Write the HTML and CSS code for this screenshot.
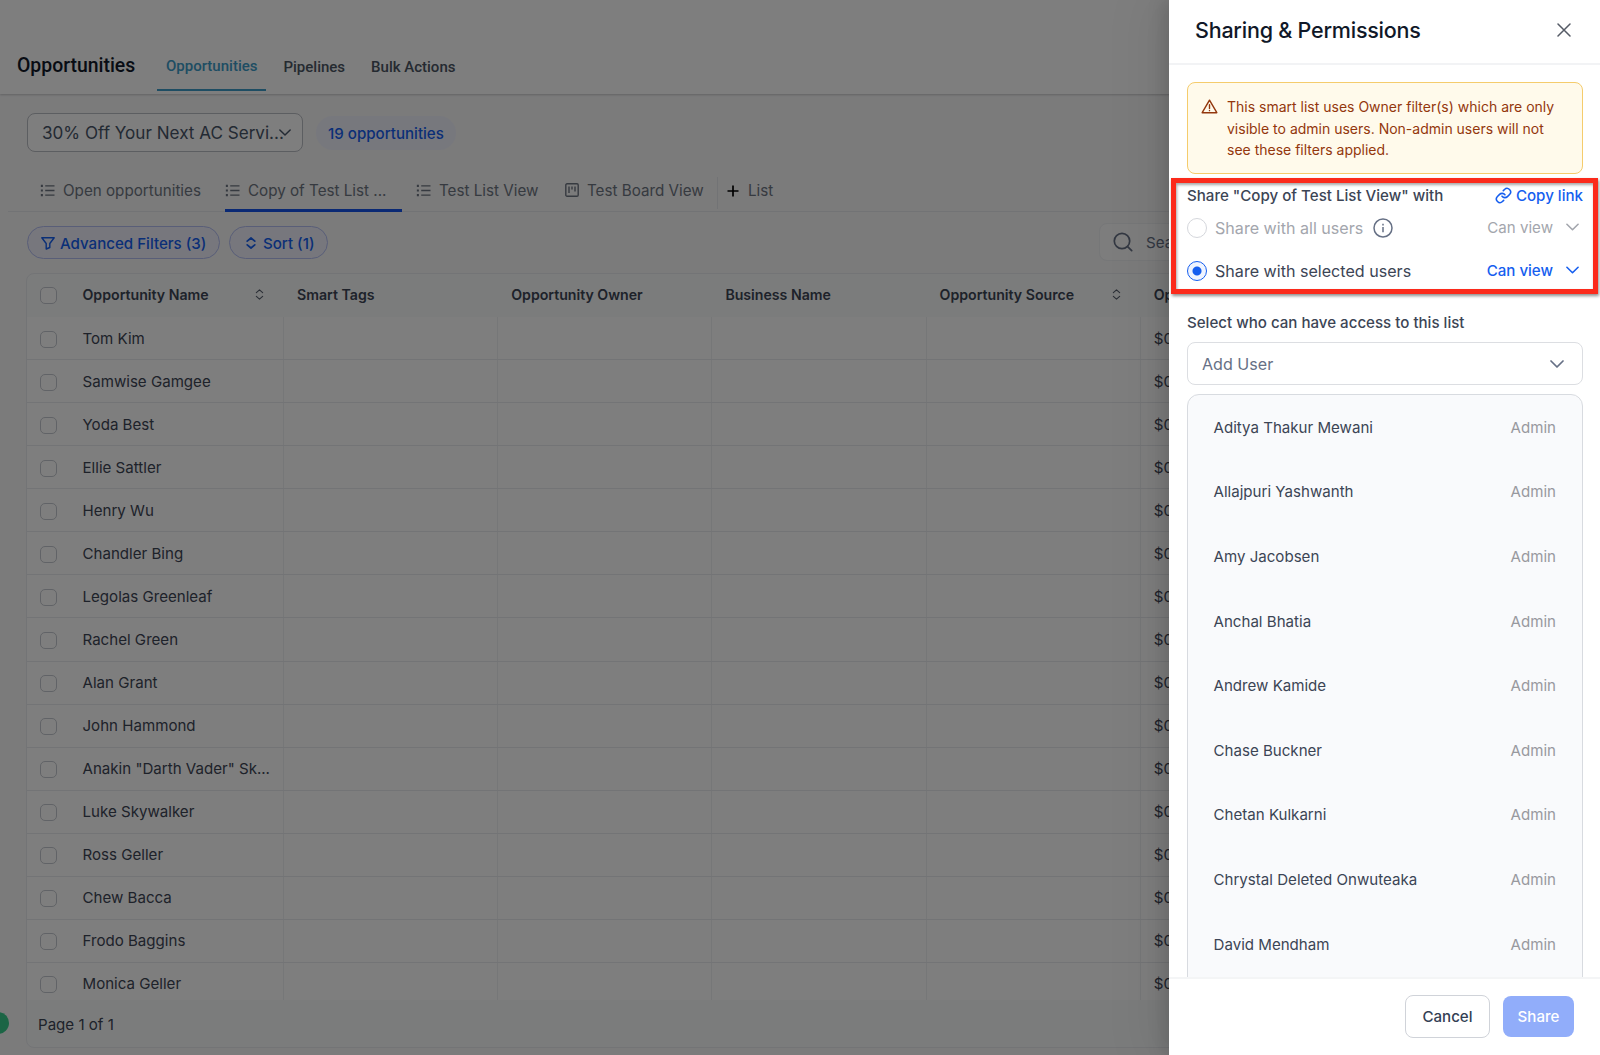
FILE: index.html
```html
<!DOCTYPE html>
<html lang="en">
<head>
    <meta charset="UTF-8">
    <meta name="viewport" content="width=device-width, initial-scale=1.0">
    <title>Opportunities</title>
    <link rel="stylesheet" href="styles.css">
</head>
<body>
    <!-- shared icons -->
    <svg class="sprite">
        <symbol id="icon-list" viewBox="0 0 16 14">
            <path d="M5 2h10M5 7h10M5 12h10" fill="none" stroke="currentColor" stroke-width="1.5"/>
            <path d="M.3.9h2.2v2.2H.3zM.3 5.9h2.2v2.2H.3zM.3 10.9h2.2v2.2H.3z" fill="currentColor"/>
        </symbol>
        <symbol id="icon-down" viewBox="0 0 14 8">
            <path d="M1 1l6 6 6-6" fill="none" stroke="currentColor" stroke-width="1.7" stroke-linecap="round" stroke-linejoin="round"/>
        </symbol>
        <symbol id="icon-sort" viewBox="0 0 10 12">
            <path d="M1.5 4L5 .8 8.5 4M1.5 8L5 11.2 8.5 8" fill="none" stroke="currentColor" stroke-width="1.2" stroke-linecap="round" stroke-linejoin="round"/>
        </symbol>
    </svg>

    <div class="page">
        <header class="topbar">
            <h1>Opportunities</h1>
            <nav class="topnav">
                <a class="active">Opportunities</a>
                <a>Pipelines</a>
                <a>Bulk Actions</a>
            </nav>
        </header>

        <div class="pipeline-row">
            <div class="pipeline-select">
                <span>30% Off Your Next AC Servi...</span>
                <svg class="chevron"><use href="#icon-down"/></svg>
            </div>
            <span class="count">19 opportunities</span>
        </div>

        <div class="views">
            <a class="view view-open"><svg class="list-icon"><use href="#icon-list"/></svg>Open opportunities</a>
            <a class="view view-copy active"><svg class="list-icon"><use href="#icon-list"/></svg>Copy of Test List ...</a>
            <a class="view view-list"><svg class="list-icon"><use href="#icon-list"/></svg>Test List View</a>
            <a class="view view-board">
                <svg class="board-icon" viewBox="0 0 14 14" fill="none" stroke="currentColor" stroke-width="1.4"><rect x=".8" y=".8" width="12.4" height="12.4" rx="1.2"/><path d="M4 3.5v6.500M7 3.5v3M10 3.5v5"/></svg>Test Board View</a>
            <a class="add-view">
                <svg viewBox="0 0 12 12"><path d="M6 .5v11M.5 6h11" stroke="#000" stroke-width="1.7"/></svg>List</a>
        </div>

        <div class="filters">
            <span class="pill pill-filter">
                <svg class="funnel" viewBox="0 0 14 13" fill="none" stroke="currentColor" stroke-width="1.4" stroke-linejoin="round"><path d="M.8.8h12.4L8.8 6.5v4L5.2 12V6.5z"/></svg>Advanced Filters (3)</span>
            <span class="pill pill-sort">
                <svg class="updown" viewBox="0 0 10 12" fill="none" stroke="currentColor" stroke-width="1.7" stroke-linecap="round" stroke-linejoin="round"><path d="M1.2 4.2L5 1l3.8 3.2M1.2 7.8L5 11l3.8-3.2"/></svg>Sort (1)</span>
            <div class="search">
                <svg viewBox="0 0 20 20" fill="none" stroke="#667085" stroke-width="1.7" stroke-linecap="round"><circle cx="9" cy="9" r="7.7"/><path d="M14.6 14.6L18.7 18.7"/></svg>
                Search
            </div>
        </div>

        <div class="table">
            <div class="table-head">
                <div class="cell name"><i class="check"></i>Opportunity Name<svg class="sort"><use href="#icon-sort"/></svg></div>
                <div class="cell">Smart Tags</div>
                <div class="cell">Opportunity Owner</div>
                <div class="cell">Business Name</div>
                <div class="cell">Opportunity Source<svg class="sort"><use href="#icon-sort"/></svg></div>
                <div class="cell">Op</div>
            </div>
            <div class="table-body" id="rows"></div>
            <div class="table-foot">Page 1 of 1</div>
        </div>
        <div class="chat-bubble"></div>
    </div>

    <div class="overlay"></div>

    <aside class="drawer">
        <div class="drawer-head">
            <h2>Sharing &amp; Permissions</h2>
            <svg class="close" viewBox="0 0 14 14"><path d="M1 1l12 12M13 1L1 13" stroke="#555b66" stroke-width="1.5" stroke-linecap="round"/></svg>
        </div>
        <div class="drawer-body">
            <div class="alert">
                <svg viewBox="0 0 18 16" fill="none" stroke="#93370d" stroke-width="1.5" stroke-linejoin="round" stroke-linecap="round"><path d="M9 1.2L16.8 14.6H1.2z"/><path d="M9 6v4M9 12.2v.2"/></svg>
                <p>This smart list uses Owner filter(s) which are only visible to admin users. Non-admin users will not see these filters applied.</p>
            </div>

            <div class="share-title">
                <span>Share "Copy of Test List View" with</span>
                <a class="copy-link">
                    <svg viewBox="0 0 24 24" fill="none" stroke="currentColor" stroke-width="2.2" stroke-linecap="round" stroke-linejoin="round"><path d="M10 13a5 5 0 0 0 7.54.54l3-3a5 5 0 0 0-7.07-7.07l-1.72 1.71"/><path d="M14 11a5 5 0 0 0-7.54-.54l-3 3a5 5 0 0 0 7.07 7.07l1.71-1.71"/></svg>Copy link</a>
            </div>
            <div class="option disabled">
                <i class="radio"></i>
                <span>Share with all users</span>
                <svg class="info" viewBox="0 0 20 20" fill="none" stroke="#667085" stroke-width="1.5"><circle cx="10" cy="10" r="9"/><path d="M10 9v5.2M10 5.8v1.6"/></svg>
                <span class="access">Can view<svg class="chevron"><use href="#icon-down"/></svg></span>
            </div>
            <div class="option selected">
                <i class="radio"></i>
                <span>Share with selected users</span>
                <span class="access">Can view<svg class="chevron"><use href="#icon-down"/></svg></span>
            </div>

            <div class="select-label">Select who can have access to this list</div>
            <div class="add-user">Add User<svg class="chevron"><use href="#icon-down"/></svg></div>

            <div class="users" id="users"></div>
        </div>
        <div class="drawer-foot">
            <button class="btn">Cancel</button>
            <button class="btn primary">Share</button>
        </div>
        <div class="highlight"></div>
    </aside>

    <script src="script.js"></script>
</body>
</html>
```
FILE: styles.css
```css
* {
    box-sizing: border-box;
}

body {
    margin: 0;
    width: 1600px;
    height: 1055px;
    overflow: hidden;
    position: relative;
    font-family: Inter, "Liberation Sans", sans-serif;
    font-size: 15.1px;
    color: #3c4555;
    background-color: #fcfcfc;
}

svg {
    flex: none;
}

.sprite {
    display: none;
}

.page {
    height: 1055px;
    display: flex;
    flex-direction: column;
    background-color: #f6f6f7;
}

/* Top bar */
.topbar {
    height: 94px;
    flex: none;
    display: flex;
    padding: 40px 0 0 17px;
    background-color: #fcfcfc;
    box-shadow: 0 1px 2px rgba(0, 0, 0, 0.2);
    font-family: Roboto, "Liberation Sans", sans-serif;
}

h1 {
    margin: 0;
    width: 140px;
    font-size: 19.4px;
    font-weight: 500;
    line-height: 51px;
    color: #101828;
}

.topnav {
    display: flex;
    height: 51px;
    gap: 8px;
}

.topnav a {
    padding: 3px 9px 0;
    font-size: 15px;
    font-weight: 500;
    line-height: 49px;
    color: #4b5563;
}

.topnav a.active {
    padding-top: 2px;
    color: #3d9bc7;
    border-bottom: 2px solid #3d9bc7;
}

/* Pipeline select */
.pipeline-row {
    height: 77px;
    flex: none;
    display: flex;
    padding: 19px 0 0 27px;
    gap: 13px;
}

.pipeline-select {
    width: 276px;
    height: 39px;
    display: flex;
    align-items: center;
    padding-left: 14px;
    border: 1px solid #b9bcc2;
    border-radius: 8px;
    background-color: #fcfcfc;
    font-size: 17.1px;
    white-space: nowrap;
    color: #475467;
}

.pipeline-select .chevron {
    margin-left: -5px;
    width: 12px;
    height: 7px;
}

.count {
    height: 34px;
    margin-top: 3px;
    padding: 0 12px;
    border-radius: 17px;
    background-color: #eff0fb;
    font-weight: 500;
    line-height: 35px;
    color: #155eef;
}

/* Smart list tabs */
.views {
    height: 41px;
    flex: none;
    margin-left: 8px;
    display: flex;
    border-bottom: 1px solid #e4e6ea;
    font-size: 15.2px;
    color: #6d7480;
}

.view {
    height: 41px;
    display: flex;
    align-items: center;
    border-bottom: 3px solid transparent;
    white-space: nowrap;
}

.view.active {
    border-color: #1552e8;
}

.view-open {
    margin-left: 32px;
    width: 185px;
}

.view-copy {
    width: 177px;
}

.view-list {
    margin-left: 14px;
    width: 149px;
}

.view-board {
    width: 152px;
}

.list-icon {
    width: 16px;
    height: 13px;
    margin-right: 7px;
}

.board-icon {
    width: 14px;
    height: 14px;
    margin-right: 8px;
}

.add-view {
    height: 32px;
    margin-top: 6px;
    padding: 0 0 5px 9px;
    border-left: 1px solid #e4e6ea;
    display: flex;
    align-items: center;
}

.add-view svg {
    width: 12px;
    height: 12px;
    margin-right: 9px;
}

/* Filters */
.filters {
    height: 61px;
    flex: none;
    display: flex;
    gap: 9px;
    padding: 14px 0 0 27px;
}

.pill {
    height: 33px;
    display: flex;
    align-items: center;
    padding-top: 1px;
    border: 1px solid #b2bcf0;
    border-radius: 17px;
    background-color: #eeeffa;
    font-weight: 500;
    white-space: nowrap;
    color: #155eef;
}

.pill-filter {
    width: 193px;
    padding-left: 13px;
}

.pill-sort {
    width: 99px;
    padding-left: 16px;
}

.funnel {
    width: 14px;
    height: 13px;
    margin-right: 5px;
}

.updown {
    width: 10px;
    height: 12px;
    margin-right: 7px;
}

.search {
    width: 460px;
    height: 38px;
    margin: -3px 41px 0 auto;
    display: flex;
    align-items: center;
    padding-left: 13px;
    border: 1px solid #eceef1;
    border-radius: 8px;
    background-color: #fafafa;
    color: #667085;
}

.search svg {
    width: 20px;
    height: 20px;
    margin-right: 13px;
}

/* Table */
.table {
    width: 1560px;
    height: 775px;
    flex: none;
    margin-left: 26px;
    display: flex;
    flex-direction: column;
    border: 1px solid #e7e9ed;
    border-radius: 8px;
    overflow: hidden;
    background-color: #f7f8f8;
}

.table-head,
.row {
    display: grid;
    grid-template-columns: 257px 214.2px 214.2px 214.2px 214.2px 1fr;
}

.table-head {
    height: 43px;
    flex: none;
    padding-bottom: 3px;
    font-size: 14.15px;
    font-weight: 600;
}

.cell {
    display: flex;
    align-items: center;
    padding-left: 13px;
    white-space: nowrap;
}

.check {
    width: 17px;
    height: 17px;
    margin: 2px 25.5px 0 0;
    border: 1px solid #c3c7ce;
    border-radius: 5px;
    background-color: #fcfcfc;
    flex: none;
}

.sort {
    width: 9px;
    height: 11px;
    margin: 0 20px 0 auto;
    color: #555d6b;
}

.table-body {
    height: 683px;
    flex: none;
    overflow: hidden;
    background-color: #fcfcfc;
}

.row {
    height: 43.07px;
    border-bottom: 1px solid #e6e8ec;
}

.row .cell {
    border-right: 1px solid #eceef1;
}

.table-foot {
    padding-left: 11px;
    line-height: 49px;
}

.chat-bubble {
    position: absolute;
    left: -13px;
    top: 1012px;
    width: 22px;
    height: 22px;
    border-radius: 50%;
    background-color: #37ca8a;
}

.overlay {
    position: absolute;
    inset: 0;
    background-color: rgba(0, 0, 0, 0.5);
}

/* Drawer */
.drawer {
    position: absolute;
    top: 0;
    right: 0;
    width: 431px;
    height: 1055px;
    display: flex;
    flex-direction: column;
    background-color: #fff;
    box-shadow: -6px 0 16px rgba(0, 0, 0, 0.12), -12px 0 48px 8px rgba(0, 0, 0, 0.06);
}

.drawer-head {
    height: 65px;
    flex: none;
    display: flex;
    justify-content: space-between;
    align-items: center;
    padding: 0 29px 4px 26px;
    border-bottom: 2px solid #f2f3f5;
}

h2 {
    margin: 0;
    font-size: 21.5px;
    letter-spacing: -0.22px;
    font-weight: 500;
    color: #101828;
}

.close {
    width: 14px;
    height: 14px;
}

.drawer-body {
    height: 912px;
    flex: none;
    overflow: hidden;
    padding: 17px 17px 0 18px;
}

.alert {
    height: 92px;
    display: flex;
    padding: 13px 14px 0 13px;
    border: 1px solid #f5cc6c;
    border-radius: 8px;
    background-color: #fffaeb;
    color: #93370d;
}

.alert svg {
    width: 17px;
    height: 15px;
    margin: 3px 9px 0 0;
}

.alert p {
    margin: 0;
    font-size: 14px;
    line-height: 21.5px;
    width: 345px;
}

.share-title {
    height: 36px;
    padding-top: 6px;
    display: flex;
    justify-content: space-between;
    align-items: center;
    font-weight: 500;
}

.copy-link {
    display: flex;
    align-items: center;
    color: #155eef;
}

.copy-link svg {
    width: 17px;
    height: 17px;
    margin-right: 4px;
}

.option {
    height: 43px;
    display: flex;
    align-items: center;
    padding-bottom: 7px;
    font-size: 16.1px;
}

.radio {
    width: 20px;
    height: 20px;
    margin-right: 8px;
    border: 1px solid #d5d7dc;
    border-radius: 50%;
}

.selected .radio {
    border-color: #155eef;
    background: radial-gradient(circle, #155eef 4px, #eff4ff 5px);
}

.disabled {
    color: #a3a6ad;
}

.info {
    width: 20px;
    height: 20px;
    margin-left: 10px;
}

.access {
    margin: -2px 4px 0 auto;
    display: flex;
    align-items: center;
    font-size: 15.1px;
}

.selected .access {
    font-weight: 500;
    color: #155eef;
}

.access .chevron {
    width: 13px;
    height: 8px;
    margin-left: 13px;
}

.select-label {
    height: 46px;
    padding-top: 15px;
    font-weight: 500;
    line-height: 23px;
}

.add-user {
    height: 43px;
    display: flex;
    justify-content: space-between;
    align-items: center;
    padding: 0 18px 0 14px;
    border: 1px solid #dcdee2;
    border-radius: 8px;
    font-size: 16.1px;
    color: #667085;
}

.add-user .chevron {
    width: 14px;
    height: 8px;
}

.users {
    height: 700px;
    margin-top: 9px;
    border: 1px solid #d8dbe0;
    border-radius: 12px;
    background-color: #f9fafc;
}

.user {
    height: 64.6px;
    display: flex;
    justify-content: space-between;
    align-items: center;
    padding: 0 26px 0 25.5px;
}

.user .role {
    color: #98999f;
}

.drawer-foot {
    flex: 1;
    display: flex;
    justify-content: flex-end;
    gap: 13px;
    padding: 16px 26px 0 0;
    border-top: 2px solid #f4f5f6;
}

.btn {
    width: 85px;
    height: 43px;
    padding: 0;
    border: 1px solid #d0d3d9;
    border-radius: 8px;
    background-color: #fff;
    font-family: inherit;
    font-size: 15.1px;
    font-weight: 500;
    color: #344054;
}

.btn.primary {
    width: 71px;
    height: 41px;
    margin-top: 1px;
    border: 0;
    background-color: #91adfa;
    color: #fff;
}

/* Red frame around the sharing options */
.highlight {
    position: absolute;
    left: 2px;
    top: 178px;
    width: 427px;
    height: 116px;
    border: 5px solid #fb2a1b;
    box-shadow: 1px 2px 3px rgba(0, 0, 0, 0.45), inset 1px 2px 3px rgba(0, 0, 0, 0.35);
}
```
FILE: script.js
```js
const opportunities = [
    'Tom Kim', 'Samwise Gamgee', 'Yoda Best', 'Ellie Sattler', 'Henry Wu', 'Chandler Bing',
    'Legolas Greenleaf', 'Rachel Green', 'Alan Grant', 'John Hammond', 'Anakin "Darth Vader" Sk...',
    'Luke Skywalker', 'Ross Geller', 'Chew Bacca', 'Frodo Baggins', 'Monica Geller'
];
const users = [
    'Aditya Thakur Mewani', 'Allajpuri Yashwanth', 'Amy Jacobsen', 'Anchal Bhatia', 'Andrew Kamide',
    'Chase Buckner', 'Chetan Kulkarni', 'Chrystal Deleted Onwuteaka', 'David Mendham'
];

const emptyCells = '<div class="cell"></div>'.repeat(4);

document.getElementById('rows').innerHTML = opportunities.map(name =>
    `<div class="row"><div class="cell name"><i class="check"></i>${name}</div>${emptyCells}<div class="cell">$0</div></div>`
).join('');

document.getElementById('users').innerHTML = users.map(name =>
    `<div class="user"><span>${name}</span><span class="role">Admin</span></div>`
).join('');
```
